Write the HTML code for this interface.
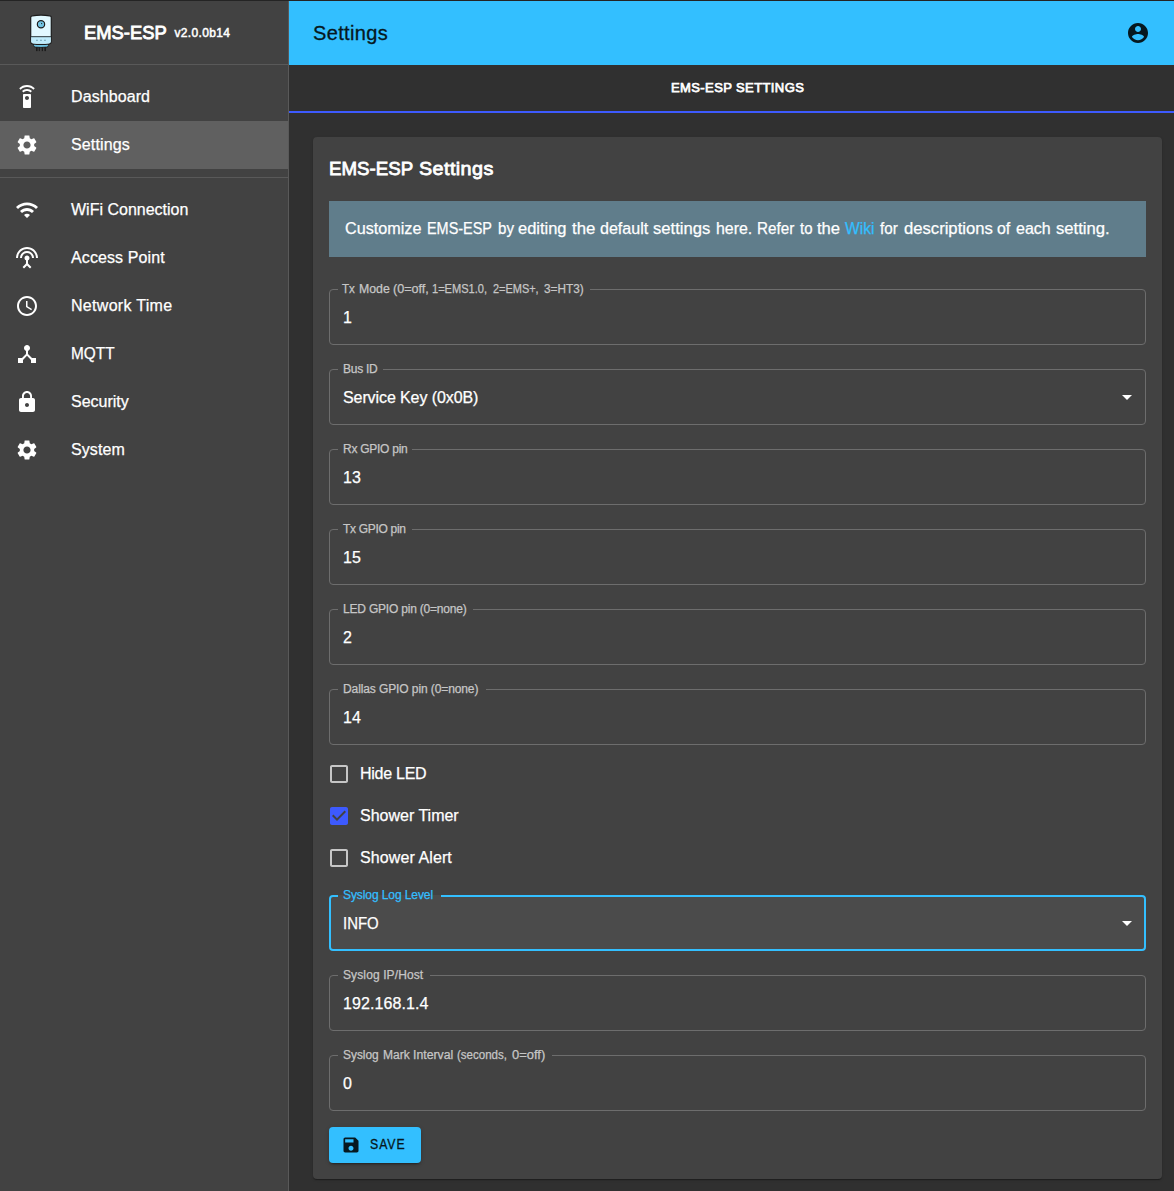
<!DOCTYPE html>
<html lang="en">
<head>
<meta charset="utf-8">
<title>EMS-ESP</title>
<style>
html,body{margin:0;padding:0;background:#303030;}
body{width:1174px;height:1191px;overflow:hidden;position:relative;background:#303030;
  font-family:"Liberation Sans",sans-serif;color:#fff;}
.abs{position:absolute;}
.t{position:absolute;white-space:nowrap;line-height:24px;font-size:16px;color:#fff;-webkit-text-stroke:.25px currentColor;}
.m{-webkit-text-stroke-width:.45px;}
svg{display:block;}
.ic{position:absolute;width:24px;height:24px;fill:#fff;}
/* sidebar */
#side{left:0;top:0;width:288px;height:1191px;background:#424242;border-right:1px solid #595959;}
.hr{position:absolute;left:0;width:288px;height:1px;background:#595959;}
#sel{left:0;top:121px;width:288px;height:48px;background:#606060;}
/* appbar */
#bar{left:289px;top:0;width:885px;height:65px;background:#33bfff;}
#ind{left:289px;top:111px;width:885px;height:2px;background:#3d5afe;}
#topline{left:0;top:0;width:1174px;height:1px;background:#242424;}
/* paper */
#paper{left:313px;top:137px;width:849px;height:1042px;background:#424242;border-radius:4px;
  box-shadow:0 2px 1px -1px rgba(0,0,0,.2),0 1px 1px 0 rgba(0,0,0,.14),0 1px 3px 0 rgba(0,0,0,.12);}
#info{left:329px;top:201px;width:817px;height:56px;background:#607d8b;}
.f{position:absolute;left:329px;width:817px;height:56px;box-sizing:border-box;border:1px solid #6d6d6d;border-radius:4px;}
.f.foc{border:2px solid #33bfff;background:#4b4b4b;}
.n{position:absolute;left:338px;height:2px;background:#424242;}
.lb{font-size:12px;line-height:14px;color:#c6c6c6;left:343px;}
.v{left:343px;}
.cl{left:360px;}
#btn{left:329px;top:1127px;width:92px;height:36px;background:#33bfff;border-radius:4px;
  box-shadow:0 3px 1px -2px rgba(0,0,0,.2),0 2px 2px 0 rgba(0,0,0,.14),0 1px 5px 0 rgba(0,0,0,.12);}

/* calibration */
#brand{-webkit-text-stroke-width:.9px;transform:scaleX(.968);transform-origin:0 0;}
#ver{letter-spacing:.35px}
#tab{-webkit-text-stroke-width:.75px;transform:scaleX(.964);transform-origin:0 0;}
#ptitle{-webkit-text-stroke-width:.8px;transform:scaleX(.984);transform-origin:0 0;}
#ptitle2{-webkit-text-stroke-width:.8px;letter-spacing:.4px;transform:scaleX(1.04);transform-origin:0 0}
#savet{-webkit-text-stroke-width:.3px;letter-spacing:1.100px !important;transform:scaleX(.875);transform-origin:0 0;}
#s0{letter-spacing:.09px}#s1{letter-spacing:.14px}#s3{letter-spacing:.11px}#s4{letter-spacing:.3px}
#s5{transform:scaleX(.96);transform-origin:0 0}#s7{letter-spacing:.08px}
#title{letter-spacing:.36px;-webkit-text-stroke-width:.3px}
.w{transform-origin:0 0}
/*LCAL*/#l0w0{transform:scaleX(0.9626);left:341.61px !important}#l0w1{transform:scaleX(1.0262);left:359.05px !important}#l0w2{transform:scaleX(1.0487);left:393.23px !important}#l0w3{transform:scaleX(0.9214);left:432.09px !important}#l0w4{transform:scaleX(0.9126);left:493.48px !important}#l0w5{transform:scaleX(0.9820);left:544.21px !important}#l8w0{transform:scaleX(0.9924);left:343.15px !important}#l8w1{transform:scaleX(1.0024);left:382.62px !important}#l8w2{transform:scaleX(1.0228);left:412.79px !important}#l8w3{transform:scaleX(0.9612);left:456.90px !important}#l8w4{transform:scaleX(1.0788);left:512.33px !important}
/*WCAL*/#w0{transform:scaleX(1.0111);left:345.32px !important}#w1{transform:scaleX(0.9014);left:427.01px !important}#w2{transform:scaleX(0.9446);left:497.81px !important}#w3{transform:scaleX(1.0290);left:518.28px !important}#w4{transform:scaleX(1.0491);left:572.30px !important}#w5{transform:scaleX(1.0025);left:600.31px !important}#w6{transform:scaleX(1.0383);left:653.30px !important}#w7{transform:scaleX(0.9944);left:715.92px !important}#w8{transform:scaleX(0.9517);left:756.99px !important}#w9{transform:scaleX(0.9348);left:799.56px !important}#w10{transform:scaleX(1.0393);left:816.86px !important}#w11{transform:scaleX(0.9771);left:844.61px !important}#w12{transform:scaleX(0.9495);left:879.90px !important}#w13{transform:scaleX(1.0397);left:904.27px !important}#w14{transform:scaleX(0.9965);left:997.35px !important}#w15{transform:scaleX(0.9986);left:1016.37px !important}#w16{transform:scaleX(1.0407);left:1055.70px !important}
#l1{letter-spacing:-.25px}#l2{letter-spacing:-.26px}#l3{letter-spacing:-.31px}
#l4{letter-spacing:-.2px}#l5{letter-spacing:-.1px}#l6{letter-spacing:-.09px}#l7{letter-spacing:.115px}
#v1{letter-spacing:-.094px}#v6{transform:scaleX(.935);transform-origin:0 0}#v7{letter-spacing:.09px}
#c0{letter-spacing:-.257px}#c2{letter-spacing:.1px}
</style>
</head>
<body>
<!-- SIDEBAR -->
<div id="side" class="abs"></div>
<div class="hr" style="top:64px"></div>
<div id="sel" class="abs"></div>
<div class="hr" style="top:177px"></div>
<svg class="abs" id="logo" style="left:28px;top:12px" width="26" height="42" viewBox="28 12 26 42">
<path d="M33.600 43.200h14.800v2.300q0 1.300-1.500 1.600q-5.900.7-11.800 0q-1.500-.3-1.500-1.600z" fill="#6fc2e2" stroke="#1c1c1c" stroke-width=".9"/>
<g fill="#1c1c1c"><rect x="36" y="47.300" width="1.600" height="3.800"/><rect x="38.700" y="47.300" width="1.200" height="3.800"/><rect x="41.800" y="47.300" width="1.200" height="3.800"/><rect x="44.400" y="47.300" width="1.600" height="3.800"/></g>
<path d="M30.700 17.400q0-1.300 1.500-1.600q8.800-1.500 17.600 0q1.500.3 1.500 1.600v24.300q0 1.700-1.800 2.100q-8.500 1.300-17 0q-1.800-.4-1.800-2.100z" fill="#e1f8ff" stroke="#1c1c1c" stroke-width="1.200"/>
<path d="M31.300 37h19.400v4.600q0 1.300-1.400 1.600q-8.300 1.200-16.600 0q-1.400-.3-1.400-1.600z" fill="#bfebfb"/>
<rect x="31" y="36.100" width="20" height="1.100" fill="#39474d"/>
<g fill="#6d9aab"><rect x="36" y="39.800" width="1.900" height=".9"/><rect x="40" y="39.800" width="1.900" height=".9"/><rect x="44" y="39.800" width="1.900" height=".9"/></g>
<circle cx="41" cy="24.300" r="3.650" fill="#7ccdeb" stroke="#1c1c1c" stroke-width="1.200"/>
<circle cx="41" cy="24.300" r="1.900" fill="none" stroke="#5db2d4" stroke-width=".6"/>
<circle cx="41.600" cy="23.600" r=".6" fill="#1c1c1c"/>
</svg>
<svg class="ic" style="left:15px;top:85px;" viewBox="0 0 24 24"><path d="M15 9H9c-.55 0-1 .45-1 1v12c0 .55.45 1 1 1h6c.55 0 1-.45 1-1V10c0-.55-.45-1-1-1zm-3 6c-1.1 0-2-.9-2-2s.9-2 2-2 2 .9 2 2-.9 2-2 2zM7.05 6.05l1.41 1.41C9.37 6.56 10.62 6 12 6s2.63.56 3.54 1.46l1.41-1.41C15.68 4.78 13.93 4 12 4s-3.68.78-4.95 2.05zM12 0C8.960 0 6.210 1.230 4.220 3.220l1.410 1.410C7.260 3.010 9.510 2 12 2s4.740 1.010 6.360 2.640l1.410-1.410C17.790 1.230 15.040 0 12 0z"/></svg>
<span class="t" id="s0" style="left:71px;top:85px">Dashboard</span>
<svg class="ic" style="left:15px;top:133px;" viewBox="0 0 24 24"><path d="M19.140 12.940c.040-.300.060-.610.060-.940 0-.320-.020-.640-.070-.940l2.030-1.580c.180-.140.230-.410.120-.610l-1.920-3.320c-.120-.220-.370-.290-.590-.220l-2.390.960c-.500-.380-1.030-.700-1.620-.940l-.360-2.540c-.040-.240-.240-.410-.480-.410h-3.840c-.240 0-.430.170-.470.410l-.360 2.540c-.590.240-1.130.570-1.620.940l-2.390-.960c-.220-.080-.470 0-.590.220L2.740 8.870c-.120.210-.080.470.120.610l2.030 1.580c-.050.300-.090.630-.090.940s.020.640.070.940l-2.030 1.580c-.180.140-.230.410-.120.610l1.920 3.320c.120.220.370.290.590.220l2.390-.960c.500.380 1.030.700 1.620.940l.360 2.540c.050.240.240.410.480.410h3.840c.240 0 .440-.170.470-.410l.360-2.540c.590-.240 1.130-.560 1.620-.940l2.390.960c.220.080.470 0 .590-.220l1.920-3.320c.120-.220.070-.470-.120-.610l-2.010-1.580zM12 15.600c-1.980 0-3.600-1.620-3.600-3.600s1.620-3.600 3.600-3.600 3.600 1.620 3.600 3.600-1.620 3.600-3.600 3.600z"/></svg>
<span class="t" id="s1" style="left:71px;top:133px">Settings</span>
<svg class="ic" style="left:15px;top:198px;" viewBox="0 0 24 24"><path d="M1 9l2 2c4.970-4.970 13.030-4.970 18 0l2-2C16.930 2.930 7.080 2.930 1 9zm8 8l3 3 3-3c-1.650-1.660-4.340-1.660-6 0zm-4-4l2 2c2.760-2.760 7.240-2.760 10 0l2-2C15.140 9.140 8.870 9.140 5 13z"/></svg>
<span class="t" id="s2" style="left:71px;top:198px">WiFi Connection</span>
<svg class="ic" style="left:15px;top:246px;" viewBox="0 0 24 24"><path d="M12 5c-3.870 0-7 3.130-7 7h2c0-2.760 2.240-5 5-5s5 2.240 5 5h2c0-3.870-3.130-7-7-7zm1 9.290c.880-.390 1.500-1.260 1.500-2.290 0-1.380-1.120-2.500-2.500-2.500S9.500 10.620 9.500 12c0 1.020.620 1.900 1.500 2.290v3.300L7.590 21 9 22.410l3-3 3 3L16.410 21 13 17.590v-3.300zM12 1C5.930 1 1 5.930 1 12h2c0-4.970 4.030-9 9-9s9 4.030 9 9h2c0-6.070-4.930-11-11-11z"/></svg>
<span class="t" id="s3" style="left:71px;top:246px">Access Point</span>
<svg class="ic" style="left:15px;top:294px;" viewBox="0 0 24 24"><path d="M11.990 2C6.470 2 2 6.480 2 12s4.470 10 9.990 10C17.520 22 22 17.520 22 12S17.520 2 11.990 2zM12 20c-4.420 0-8-3.580-8-8s3.580-8 8-8 8 3.580 8 8-3.580 8-8 8zm.500-13H11v6l5.250 3.150.750-1.230-4.500-2.670z"/></svg>
<span class="t" id="s4" style="left:71px;top:294px">Network Time</span>
<svg class="ic" style="left:15px;top:342px;" viewBox="0 0 24 24"><path d="M17 16l-4-4V8.820C14.160 8.400 15 7.300 15 6c0-1.660-1.340-3-3-3S9 4.340 9 6c0 1.300.840 2.400 2 2.820V12l-4 4H3v5h5v-3.050l4-4.200 4 4.200V21h5v-5h-4z"/></svg>
<span class="t" id="s5" style="left:71px;top:342px">MQTT</span>
<svg class="ic" style="left:15px;top:390px;" viewBox="0 0 24 24"><path d="M18 8h-1V6c0-2.760-2.240-5-5-5S7 3.240 7 6v2H6c-1.100 0-2 .900-2 2v10c0 1.100.900 2 2 2h12c1.100 0 2-.900 2-2V10c0-1.100-.900-2-2-2zm-6 9c-1.100 0-2-.900-2-2s.900-2 2-2 2 .900 2 2-.900 2-2 2zm3.100-9H8.900V6c0-1.710 1.390-3.100 3.100-3.100 1.710 0 3.100 1.390 3.100 3.100v2z"/></svg>
<span class="t" id="s6" style="left:71px;top:390px">Security</span>
<svg class="ic" style="left:15px;top:438px;" viewBox="0 0 24 24"><path d="M19.140 12.940c.040-.300.060-.610.060-.940 0-.320-.020-.640-.070-.940l2.030-1.580c.180-.140.230-.410.120-.610l-1.920-3.320c-.120-.220-.370-.290-.590-.220l-2.390.960c-.500-.380-1.030-.700-1.620-.940l-.360-2.540c-.040-.240-.240-.410-.480-.410h-3.840c-.240 0-.430.170-.470.410l-.360 2.540c-.590.240-1.130.570-1.620.940l-2.390-.960c-.220-.080-.470 0-.590.220L2.740 8.870c-.120.210-.080.470.120.610l2.030 1.580c-.050.300-.090.630-.090.940s.020.640.070.940l-2.030 1.580c-.180.140-.230.410-.120.610l1.920 3.320c.120.220.370.290.590.220l2.390-.960c.500.380 1.030.700 1.620.940l.360 2.540c.050.240.240.410.480.410h3.840c.240 0 .440-.170.470-.410l.360-2.540c.590-.240 1.130-.560 1.620-.940l2.390.960c.220.080.470 0 .590-.220l1.920-3.320c.120-.220.070-.470-.120-.610l-2.010-1.580zM12 15.600c-1.980 0-3.600-1.620-3.600-3.600s1.620-3.600 3.600-3.600 3.600 1.620 3.600 3.600-1.620 3.600-3.600 3.600z"/></svg>
<span class="t" id="s7" style="left:71px;top:438px">System</span>
<span class="t m" id="brand" style="left:83.5px;top:17px;font-size:19px;line-height:32px">EMS-ESP</span>
<span class="t" id="ver" style="left:174.5px;top:21px;font-size:12px;-webkit-text-stroke-width:.5px">v2.0.0b14</span>

<!-- APPBAR / TABS -->
<div id="bar" class="abs"></div>
<div id="ind" class="abs"></div>
<span class="t" id="title" style="left:313px;top:17px;font-size:20px;line-height:32px;color:#061820">Settings</span>
<svg class="ic" style="left:1126px;top:21px;fill:#061820" viewBox="0 0 24 24"><path d="M12 2C6.480 2 2 6.480 2 12s4.480 10 10 10 10-4.480 10-10S17.520 2 12 2zm0 3c1.660 0 3 1.340 3 3s-1.340 3-3 3-3-1.340-3-3 1.340-3 3-3zm0 14.200c-2.500 0-4.710-1.280-6-3.220.030-1.990 4-3.080 6-3.080 1.990 0 5.970 1.090 6 3.080-1.290 1.940-3.500 3.220-6 3.220z"/></svg>
<span class="t m" id="tab" style="left:670.600px;top:76px;font-size:13.500px;letter-spacing:0.4px">EMS-ESP SETTINGS</span>
<div id="topline" class="abs"></div>

<!-- PAPER -->
<div id="paper" class="abs"></div>
<div id="info" class="abs"></div>
<span class="t m" id="ptitle" style="left:328.500px;top:153px;font-size:19px;line-height:32px">EMS-ESP</span>
<span class="t m" id="ptitle2" style="left:419px;top:153px;font-size:19px;line-height:32px">Settings</span>
<span class="t w" id="w0" style="left:345.1px;top:217px">Customize</span>
<span class="t w" id="w1" style="left:426.9px;top:217px">EMS-ESP</span>
<span class="t w" id="w2" style="left:497.4px;top:217px">by</span>
<span class="t w" id="w3" style="left:517.9px;top:217px">editing</span>
<span class="t w" id="w4" style="left:571.5px;top:217px">the</span>
<span class="t w" id="w5" style="left:600.2px;top:217px">default</span>
<span class="t w" id="w6" style="left:653.4px;top:217px">settings</span>
<span class="t w" id="w7" style="left:715.7px;top:217px">here.</span>
<span class="t w" id="w8" style="left:756.6px;top:217px">Refer</span>
<span class="t w" id="w9" style="left:798.0px;top:217px">to</span>
<span class="t w" id="w10" style="left:815.9px;top:217px">the</span>
<span class="t w" id="w11" style="left:844.0px;top:217px;color:#33bfff">Wiki</span>
<span class="t w" id="w12" style="left:878.9px;top:217px">for</span>
<span class="t w" id="w13" style="left:903.5px;top:217px">descriptions</span>
<span class="t w" id="w14" style="left:997.5px;top:217px">of</span>
<span class="t w" id="w15" style="left:1015.9px;top:217px">each</span>
<span class="t w" id="w16" style="left:1055.0px;top:217px">setting.</span>
<div class="f" style="top:289px"></div>
<div class="n" style="top:289px;width:252px;background:#424242"></div>
<span class="t lb w" id="l0w0" style="left:343.6px;top:282px">Tx</span>
<span class="t lb w" id="l0w1" style="left:359.3px;top:282px">Mode</span>
<span class="t lb w" id="l0w2" style="left:393.0px;top:282px">(0=off,</span>
<span class="t lb w" id="l0w3" style="left:432.4px;top:282px">1=EMS1.0,</span>
<span class="t lb w" id="l0w4" style="left:493.1px;top:282px">2=EMS+,</span>
<span class="t lb w" id="l0w5" style="left:543.7px;top:282px">3=HT3)</span>
<span class="t v" id="v0" style="top:306px">1</span>
<div class="f" style="top:369px"></div>
<div class="n" style="top:369px;width:45px;background:#424242"></div>
<span class="t lb" id="l1" style="top:362px;">Bus ID</span>
<span class="t v" id="v1" style="top:386px">Service Key (0x0B)</span>
<svg class="ic" style="left:1115px;top:385px" viewBox="0 0 24 24"><path d="M7 10l5 5 5-5z"/></svg>
<div class="f" style="top:449px"></div>
<div class="n" style="top:449px;width:74px;background:#424242"></div>
<span class="t lb" id="l2" style="top:442px;">Rx GPIO pin</span>
<span class="t v" id="v2" style="top:466px">13</span>
<div class="f" style="top:529px"></div>
<div class="n" style="top:529px;width:74px;background:#424242"></div>
<span class="t lb" id="l3" style="top:522px;">Tx GPIO pin</span>
<span class="t v" id="v3" style="top:546px">15</span>
<div class="f" style="top:609px"></div>
<div class="n" style="top:609px;width:135px;background:#424242"></div>
<span class="t lb" id="l4" style="top:602px;">LED GPIO pin (0=none)</span>
<span class="t v" id="v4" style="top:626px">2</span>
<div class="f" style="top:689px"></div>
<div class="n" style="top:689px;width:148px;background:#424242"></div>
<span class="t lb" id="l5" style="top:682px;">Dallas GPIO pin (0=none)</span>
<span class="t v" id="v5" style="top:706px">14</span>
<div class="f foc" style="top:895px"></div>
<div class="n" style="top:895px;width:103px;background:#4b4b4b"></div>
<span class="t lb" id="l6" style="top:888px;color:#33bfff;">Syslog Log Level</span>
<span class="t v" id="v6" style="top:912px">INFO</span>
<svg class="ic" style="left:1115px;top:911px" viewBox="0 0 24 24"><path d="M7 10l5 5 5-5z"/></svg>
<div class="f" style="top:975px"></div>
<div class="n" style="top:975px;width:92px;background:#424242"></div>
<span class="t lb" id="l7" style="top:968px;">Syslog IP/Host</span>
<span class="t v" id="v7" style="top:992px">192.168.1.4</span>
<div class="f" style="top:1055px"></div>
<div class="n" style="top:1055px;width:214px;background:#424242"></div>
<span class="t lb w" id="l8w0" style="left:343.0px;top:1048px">Syslog</span>
<span class="t lb w" id="l8w1" style="left:382.6px;top:1048px">Mark</span>
<span class="t lb w" id="l8w2" style="left:413.0px;top:1048px">Interval</span>
<span class="t lb w" id="l8w3" style="left:456.9px;top:1048px">(seconds,</span>
<span class="t lb w" id="l8w4" style="left:512.2px;top:1048px">0=off)</span>
<span class="t v" id="v8" style="top:1072px">0</span>
<svg class="ic" style="left:327px;top:762px;fill:#c6c6c6" viewBox="0 0 24 24"><path d="M19 5v14H5V5h14m0-2H5c-1.100 0-2 .900-2 2v14c0 1.100.900 2 2 2h14c1.100 0 2-.900 2-2V5c0-1.100-.900-2-2-2z"/></svg>
<span class="t cl" id="c0" style="top:762px">Hide LED</span>
<svg class="ic" style="left:327px;top:804px;fill:#3d5afe" viewBox="0 0 24 24"><path d="M19 3H5c-1.110 0-2 .900-2 2v14c0 1.100.890 2 2 2h14c1.110 0 2-.900 2-2V5c0-1.100-.890-2-2-2zm-9 14l-5-5 1.410-1.410L10 14.170l7.590-7.590L19 8l-9 9z"/></svg>
<span class="t cl" id="c1" style="top:804px">Shower Timer</span>
<svg class="ic" style="left:327px;top:846px;fill:#c6c6c6" viewBox="0 0 24 24"><path d="M19 5v14H5V5h14m0-2H5c-1.100 0-2 .900-2 2v14c0 1.100.900 2 2 2h14c1.100 0 2-.900 2-2V5c0-1.100-.900-2-2-2z"/></svg>
<span class="t cl" id="c2" style="top:846px">Shower Alert</span>
<div id="btn" class="abs"></div>
<svg class="ic" style="left:341px;top:1135px;width:20px;height:20px;fill:#061820" viewBox="0 0 24 24"><path d="M17 3H5c-1.110 0-2 .900-2 2v14c0 1.100.890 2 2 2h14c1.100 0 2-.900 2-2V7l-4-4zm-5 16c-1.660 0-3-1.340-3-3s1.340-3 3-3 3 1.340 3 3-1.340 3-3 3zm3-10H5V5h10v4z"/></svg>
<span class="t m" id="savet" style="left:369.5px;top:1132px;font-size:14px;letter-spacing:0.4px;color:#061820">SAVE</span>
</body>
</html>
